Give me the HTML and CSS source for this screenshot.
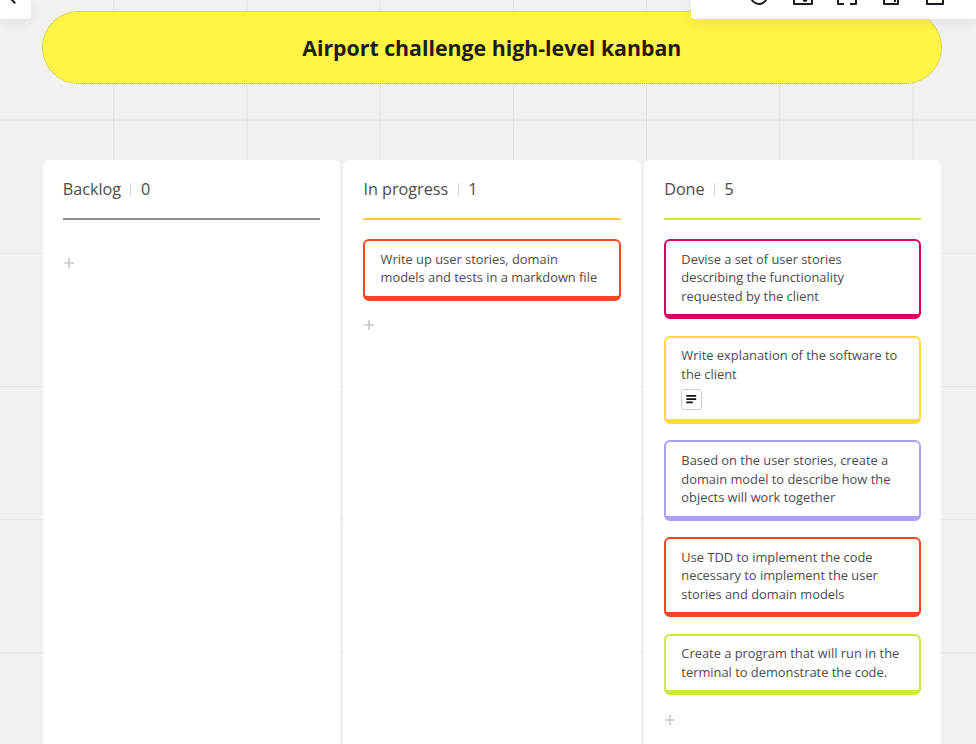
FILE: index.html
```html
<!DOCTYPE html>
<html lang="en">
<head>
<meta charset="utf-8">
<title>Airport challenge high-level kanban</title>
<link rel="stylesheet" href="styles.css">
</head>
<body>
<main class="canvas">
  <h1 class="title"><span>Airport challenge high-level kanban</span></h1>
  <div class="board">
    <section class="column">
      <header class="column-head gray"><h2>Backlog</h2><i></i><b>0</b></header>
      <div class="cards">
        <svg class="plus" viewBox="0 0 10 10"><path d="M5 0v10M0 5h10"/></svg>
      </div>
    </section>
    <section class="column">
      <header class="column-head amber"><h2>In progress</h2><i></i><b>1</b></header>
      <div class="cards">
        <article class="card red"><p>Write up user stories, domain<br>models and tests in a markdown file</p></article>
        <svg class="plus" viewBox="0 0 10 10"><path d="M5 0v10M0 5h10"/></svg>
      </div>
    </section>
    <section class="column">
      <header class="column-head lime"><h2>Done</h2><i></i><b>5</b></header>
      <div class="cards">
        <article class="card pink"><p>Devise a set of user stories<br>describing the functionality<br>requested by the client</p></article>
        <article class="card yellow"><p>Write explanation of the software to<br>the client</p>
          <svg class="note" viewBox="0 0 21 21"><rect x=".5" y=".5" width="20" height="20" rx="2"/><path d="M5.3 6.9h9.9M5.3 10.1h9.9M5.3 13.3h6.5"/></svg>
        </article>
        <article class="card violet"><p>Based on the user stories, create a<br>domain model to describe how the<br>objects will work together</p></article>
        <article class="card red"><p>Use TDD to implement the code<br>necessary to implement the user<br>stories and domain models</p></article>
        <article class="card lime"><p>Create a program that will run in the<br>terminal to demonstrate the code.</p></article>
        <svg class="plus" viewBox="0 0 10 10"><path d="M5 0v10M0 5h10"/></svg>
      </div>
    </section>
  </div>
</main>
<nav class="back"><svg viewBox="0 0 31 19"><path d="M9-3l6.2 6.2"/></svg></nav>
<nav class="toolbar">
  <svg viewBox="0 0 285 19">
    <circle cx="68" cy="-4" r="8"/>
    <path d="M103-6V4h18V-6"/><circle class="dot" cx="114" cy="-.5" r="2.4"/>
    <path d="M147-2V4h6M159 4h6V-2"/>
    <path d="M193-6V4h14V-6M204-2V2"/>
    <path d="M236-6V4h16V-6"/>
  </svg>
</nav>
</body>
</html>
```
FILE: styles.css
```css
* { box-sizing: border-box; }
html, body { height: 100%; }
body {
  margin: 0;
  overflow: hidden;
  position: relative;
  font-family: "Open Sans", sans-serif;
  color: #4c4c4c;
}
svg { display: block; fill: none; }
.canvas {
  height: 744px;
  padding: 11px 34.5px 0 42.5px;
  background-color: #f1f1f1;
  background-image:
    linear-gradient(90deg, #e2e2e2 1.3px, transparent 1.3px),
    linear-gradient(#e2e2e2 1.3px, transparent 1.3px);
  background-size: 133.2px 133.2px;
  background-position: 113.3px 119.6px;
}
.title {
  margin: 0 0 0 -.5px;
  height: 73.4px;
  padding-bottom: .6px;
  display: flex;
  align-items: center;
  justify-content: center;
  border: 1px dotted #b5b16c;
  border-radius: 37px;
  background: #fef445;
  color: #1c1c1c;
  font-size: 21.3px;
  font-weight: 700;
}
.board {
  display: grid;
  grid-template-columns: repeat(3, 1fr);
  gap: 3.2px;
  margin-top: 75.9px;
  height: 620px;
}
.column {
  padding: 0 20.2px;
  border-radius: 6px;
  background: #fff;
}
.column-head {
  height: 59.7px;
  display: flex;
  align-items: center;
  border-bottom: 2px solid var(--c);
}
.column-head h2, .column-head b {
  margin: 0;
  font-size: 16.2px;
  line-height: 22px;
  font-weight: 400;
}
.column-head i {
  width: 1px;
  height: 13px;
  margin: 0 9.6px 0 9.3px;
  background: #d9d9d9;
}
.cards {
  display: flex;
  flex-direction: column;
  gap: 16.3px;
  padding-top: 19px;
}
.card {
  padding: 8.7px 15.2px 8.8px;
  border: 2px solid var(--c);
  border-bottom-width: 5px;
  border-radius: 6px;
  font-size: 12.86px;
  line-height: 18.6px;
}
.card p { margin: 0; white-space: nowrap; }
.gray { --c: #8d8d8d; }
.amber { --c: #fac934; }
.lime { --c: #cee741; }
.red { --c: #f24726; }
.pink { --c: #da0063; }
.yellow { --c: #ffdc30; }
.violet { --c: #aaa0ff; }
.plus {
  width: 10px;
  height: 10px;
  margin: 3px 0 0 .9px;
  stroke: #c9c9c9;
  stroke-width: 1.6;
}
.cards .plus:first-child { margin-top: 18.7px; }
.note {
  width: 21px;
  height: 21px;
  margin: 5.4px 0 .6px -.3px;
}
.note rect { stroke: #ccc; }
.note path { stroke: #111; stroke-width: 1.7; }
.back, .toolbar {
  position: absolute;
  top: 0;
  height: 19px;
  background: #fff;
  box-shadow: 0 3px 14px rgba(0, 0, 0, .08);
}
.back { left: 0; width: 31px; border-bottom-right-radius: 4px; }
.toolbar { right: 0; width: 285px; border-bottom-left-radius: 4px; }
.back svg, .toolbar svg {
  width: 100%;
  height: 100%;
  stroke: #1c1b24;
  stroke-width: 2;
  stroke-linejoin: round;
}
.toolbar .dot { fill: #1c1b24; stroke: none; }
```
